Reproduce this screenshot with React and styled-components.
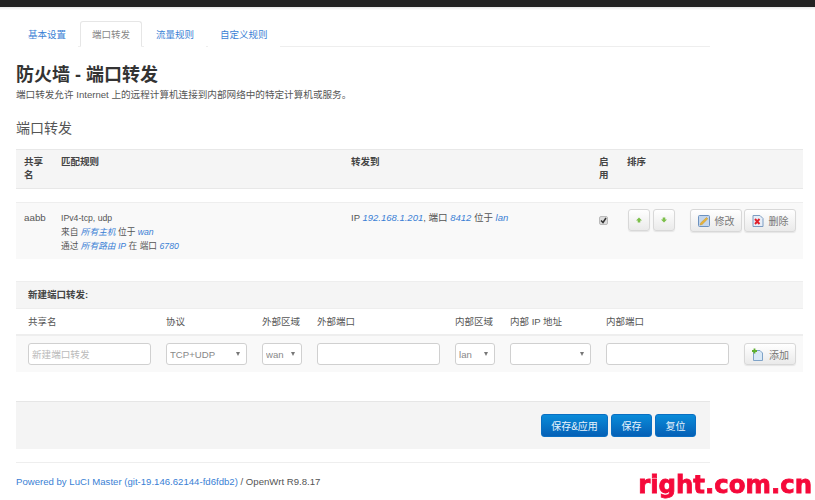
import styled, { createGlobalStyle } from "styled-components";

const GlobalStyle = createGlobalStyle`
    html, body {
        margin: 0;
        padding: 0;
        height: 500px;
        overflow: hidden;
        background: #fff;
    }
    * {
        box-sizing: border-box;
    }
    body {
        font-family: "Liberation Sans", "Noto Sans CJK SC", sans-serif;
        font-size: 10px;
        color: #555;
    }
`;

const TopBar = styled.div`
    height: 10px;
    background: linear-gradient(#222 0, #222 7px, #e8e8e8 7px, #fff 10px);
`;

const Page = styled.div`
    padding: 11px 12px 0 16px;
`;

const Tabs = styled.ul`
    display: flex;
    width: 694px;
    height: 26px;
    margin: 0;
    padding: 0;
    list-style: none;
    border-bottom: 1px solid #eee;
`;

const Tab = styled.li`
    height: 26px;
    padding: 0 11px;
    font-size: 9.5px;
    line-height: 26px;
    color: ${props => (props.$active ? "#888" : "#3a7fd5")};
    background: #fff;
    border: 1px solid ${props => (props.$active ? "#e6e6e6" : "transparent")};
    border-bottom: ${props => (props.$active ? "1px solid #fff" : "none")};
    border-radius: 3px 3px 0 0;
    margin-right: 2px;
`;

const Title = styled.h2`
    margin: 17px 0 0;
    font-size: 18px;
    line-height: 22px;
    font-weight: 700;
    color: #333;
`;

const Desc = styled.p`
    margin: 2px 0 0;
    font-size: 9.6px;
    line-height: 13px;
    color: #555;
`;

const SectionTitle = styled.h3`
    margin: 17px 0 0;
    font-size: 14px;
    line-height: 20px;
    font-weight: 400;
    color: #555;
`;

const Grid = styled.div`
    display: grid;
    grid-template-columns: 37px 290px 248px 28px 184px;
    width: 787px;
`;

const HeadRow = styled(Grid)`
    height: 40px;
    margin-top: 11px;
    background: #f5f5f5;
    border-top: 1px solid #e8e8e8;
    border-bottom: 1px solid #e8e8e8;
`;

const HeadCell = styled.div`
    padding: 5px 8px 0;
    font-size: 9.5px;
    line-height: 13px;
    font-weight: 700;
    color: #444;
`;

const DataRow = styled(Grid)`
    height: 57px;
    margin-top: 13px;
    background: #f9f9f9;
    border-top: 1px solid #eee;
`;

const DataCell = styled.div`
    padding: 8px 8px 0;
    font-size: ${props => props.$size || "8.7px"};
    line-height: 14px;
    color: #555;
`;

const Value = styled.em`
    color: #3a7fd5;
    font-style: italic;
`;

const CheckBox = styled.span`
    display: block;
    width: 9px;
    height: 9px;
    margin-top: 5px;
    background: #ddd;
    border: 1px solid #bbb;
    border-radius: 2px;
`;

const Controls = styled.div`
    display: flex;
    align-items: flex-start;
    padding: 6px 0 0 9px;
`;

const Button = styled.button`
    display: inline-flex;
    align-items: center;
    justify-content: center;
    gap: 5px;
    height: 23px;
    padding: 0;
    font-family: inherit;
    font-size: 10px;
    color: #777;
    background: linear-gradient(#fff, #eaeaea);
    border: 1px solid #d8d8d8;
    border-radius: 3px;
    box-shadow: 0 1px 1px rgba(0, 0, 0, 0.08);
`;

const SortButton = styled(Button)`
    width: 22px;
    height: 22px;
    margin-right: 3px;
`;

const ActionButton = styled(Button)`
    width: 52px;
    margin-left: ${props => props.$gap || "2px"};
`;

const NewSection = styled.div`
    width: 787px;
    margin-top: 22px;
`;

const NewHead = styled.div`
    height: 28px;
    padding-left: 12px;
    font-size: 9.5px;
    line-height: 26px;
    font-weight: 700;
    color: #444;
    background: #f5f5f5;
    border-top: 1px solid #eee;
    border-bottom: 1px solid #eee;
`;

const NewGrid = styled.div`
    display: grid;
    grid-template-columns: 123px 81px 40px 123px 40px 81px 123px 52px;
    column-gap: 15px;
    padding-left: 12px;
`;

const LabelRow = styled(NewGrid)`
    height: 27px;
    font-size: 9.5px;
    line-height: 26px;
    color: #555;
    border-bottom: 2px solid #eee;
`;

const InputRow = styled(NewGrid)`
    height: 36px;
    align-items: center;
    background: #f9f9f9;
`;

const TextInput = styled.input`
    width: 100%;
    height: 22px;
    padding: 0 3px;
    font-family: inherit;
    font-size: 9.6px;
    color: #888;
    background: #fff;
    border: 1px solid #d0d0d0;
    border-radius: 3px;

    &::placeholder {
        color: #bbb;
        opacity: 1;
    }
`;

const SelectWrap = styled.div`
    position: relative;
    height: 22px;

    &::after {
        content: "";
        position: absolute;
        right: 7px;
        top: 9px;
        border-left: 2.5px solid transparent;
        border-right: 2.5px solid transparent;
        border-top: 4px solid #777;
    }
`;

const Select = styled.select`
    width: 100%;
    height: 22px;
    padding: 0 3px;
    font-family: inherit;
    font-size: 9.6px;
    color: #888;
    background: #fff;
    border: 1px solid #d0d0d0;
    border-radius: 3px;
    appearance: none;
`;

const AddButton = styled(Button)`
    width: 52px;
    height: 22px;
`;

const ActionBar = styled.div`
    display: flex;
    justify-content: flex-end;
    gap: 3px;
    width: 694px;
    height: 48px;
    margin-top: 29px;
    padding: 12px 14px 0 0;
    background: #f4f4f4;
    border-top: 1px solid #e6e6e6;
`;

const PrimaryButton = styled.button`
    width: ${props => props.$width};
    height: 23px;
    padding: 0;
    font-family: inherit;
    font-size: 10px;
    color: #e8f3fc;
    background: linear-gradient(#0a8bd9, #0560b6);
    border: 1px solid #0a6fc2;
    border-radius: 3px;
`;

const Footer = styled.footer`
    width: 694px;
    height: 36px;
    margin-top: 13px;
    border-top: 1px solid #eee;
    font-size: 9.6px;
    line-height: 38px;
    color: #555;
`;

const FooterLink = styled.a`
    color: #3a7fd5;
`;

const Watermark = styled.div`
    position: fixed;
    right: 3px;
    bottom: 1px;
    font-family: "DejaVu Sans", sans-serif;
    font-size: 24.4px;
    line-height: 28px;
    font-weight: 700;
    color: #f5093a;
    -webkit-text-stroke: 0.8px #f5093a;
`;

function Check() {
    return (
        <svg width="7" height="7" viewBox="0 0 7 7" style={{ display: "block" }}>
            <path d="M1 3.5 L3 5.5 L6 1" fill="none" stroke="#333" strokeWidth="1.5" />
        </svg>
    );
}

function Arrow({ down }) {
    return (
        <svg width="6" height="6" viewBox="0 0 7 7">
            <path
                d={down ? "M2 0.5 H5 V3 H7 L3.5 6.5 L0 3 H2 Z" : "M3.5 0.5 L7 4 H5 V6.5 H2 V4 H0 Z"}
                fill="#7cbf4a"
            />
        </svg>
    );
}

function EditIcon() {
    return (
        <svg width="12" height="12" viewBox="0 0 12 12">
            <rect x="0.5" y="0.5" width="11" height="11" rx="1" fill="#c4d6ec" stroke="#6c92c0" />
            <path d="M2 10 L2.8 7.8 L8.5 2.5 L9.8 3.8 L4.2 9.4 Z" fill="#e8b33a" stroke="#c2962c" strokeWidth="0.5" />
        </svg>
    );
}

function DeleteIcon() {
    return (
        <svg width="12" height="12" viewBox="0 0 12 12">
            <path d="M1 0.5 H8 L11 3.5 V11.5 H1 Z" fill="#e6eef8" stroke="#7d9cc2" />
            <path d="M3 4 L7.5 9 M7.5 4 L3 9" stroke="#e0202a" strokeWidth="1.9" />
        </svg>
    );
}

function AddIcon() {
    return (
        <svg width="13" height="13" viewBox="0 0 13 13">
            <path d="M2.5 2.5 H9 L11.5 5 V12.5 H2.5 Z" fill="#d8e8f6" stroke="#7fa3c8" />
            <path d="M3.5 0.5 V5.5 M1 3 H6" stroke="#5fb030" strokeWidth="1.8" />
        </svg>
    );
}

function App() {
    return (
        <>
            <GlobalStyle />
            <TopBar />
            <Page>
                <Tabs>
                    <Tab>基本设置</Tab>
                    <Tab $active>端口转发</Tab>
                    <Tab>流量规则</Tab>
                    <Tab>自定义规则</Tab>
                </Tabs>

                <Title>防火墙 - 端口转发</Title>
                <Desc>端口转发允许 Internet 上的远程计算机连接到内部网络中的特定计算机或服务。</Desc>
                <SectionTitle>端口转发</SectionTitle>

                <HeadRow>
                    <HeadCell>共享名</HeadCell>
                    <HeadCell>匹配规则</HeadCell>
                    <HeadCell>转发到</HeadCell>
                    <HeadCell>启用</HeadCell>
                    <HeadCell>排序</HeadCell>
                </HeadRow>
                <DataRow>
                    <DataCell $size="9.8px">aabb</DataCell>
                    <DataCell>
                        IPv4-tcp, udp<br />
                        来自 <Value>所有主机</Value> 位于 <Value>wan</Value><br />
                        通过 <Value>所有路由 IP</Value> 在 端口 <Value>6780</Value>
                    </DataCell>
                    <DataCell $size="9.5px">
                        IP <Value>192.168.1.201</Value>, 端口 <Value>8412</Value> 位于 <Value>lan</Value>
                    </DataCell>
                    <DataCell><CheckBox><Check /></CheckBox></DataCell>
                    <Controls>
                        <SortButton><Arrow /></SortButton>
                        <SortButton><Arrow down /></SortButton>
                        <ActionButton $gap="12px"><EditIcon />修改</ActionButton>
                        <ActionButton><DeleteIcon />删除</ActionButton>
                    </Controls>
                </DataRow>

                <NewSection>
                    <NewHead>新建端口转发:</NewHead>
                    <LabelRow>
                        <span>共享名</span>
                        <span>协议</span>
                        <span>外部区域</span>
                        <span>外部端口</span>
                        <span>内部区域</span>
                        <span>内部 IP 地址</span>
                        <span>内部端口</span>
                    </LabelRow>
                    <InputRow>
                        <TextInput placeholder="新建端口转发" />
                        <SelectWrap>
                            <Select defaultValue="TCP+UDP"><option>TCP+UDP</option></Select>
                        </SelectWrap>
                        <SelectWrap>
                            <Select defaultValue="wan"><option>wan</option></Select>
                        </SelectWrap>
                        <TextInput />
                        <SelectWrap>
                            <Select defaultValue="lan"><option>lan</option></Select>
                        </SelectWrap>
                        <SelectWrap>
                            <Select><option></option></Select>
                        </SelectWrap>
                        <TextInput />
                        <AddButton><AddIcon />添加</AddButton>
                    </InputRow>
                </NewSection>

                <ActionBar>
                    <PrimaryButton $width="67px">保存&应用</PrimaryButton>
                    <PrimaryButton $width="41px">保存</PrimaryButton>
                    <PrimaryButton $width="41px">复位</PrimaryButton>
                </ActionBar>

                <Footer>
                    <FooterLink>Powered by LuCI Master (git-19.146.62144-fd6fdb2)</FooterLink> / OpenWrt R9.8.17
                </Footer>
            </Page>
            <Watermark>right.com.cn</Watermark>
        </>
    );
}

export default App;
